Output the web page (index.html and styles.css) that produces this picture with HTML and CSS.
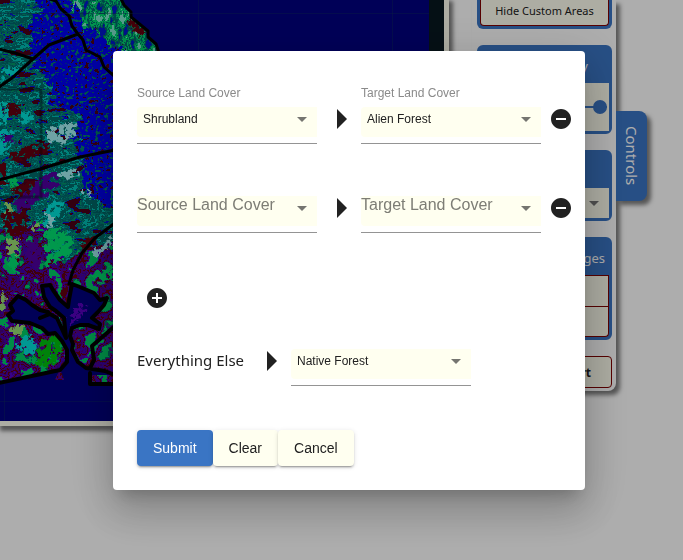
FILE: index.html
```html
<!DOCTYPE html>
<html lang="en">
<head>
<meta charset="utf-8">
<title>Land Cover</title>
<link rel="stylesheet" href="styles.css">
</head>
<body>
<main class="page">
  <section class="map">
    <svg class="map-tiles" width="429" height="421" viewBox="0 0 429 421" aria-hidden="true">
      <defs>
        <filter id="upland" x="0" y="0" width="1" height="1" color-interpolation-filters="sRGB">
          <feTurbulence type="fractalNoise" baseFrequency="0.2 0.26" numOctaves="3" seed="4"/>
          <feColorMatrix values="2.2 0 0 0 -0.6  2.2 0 0 0 -0.6  2.2 0 0 0 -0.6  0 0 0 0 1"/>
          <feComponentTransfer result="n">
            <feFuncR type="discrete" tableValues="0 0 0 0 0 0 0 0 0 0.3"/>
            <feFuncG type="discrete" tableValues="0.5 0.38 0 0 0 0 0 0 0.2 0"/>
            <feFuncB type="discrete" tableValues="0.45 0.5 0.96 0.96 0.96 0.96 0.96 0.96 0.7 0.1"/>
          </feComponentTransfer>
          <feComposite in="n" in2="SourceGraphic" operator="in"/>
        </filter>
        <filter id="scrub" x="-0.1" y="-0.1" width="1.2" height="1.2" color-interpolation-filters="sRGB">
          <feTurbulence type="fractalNoise" baseFrequency="0.06 0.14" numOctaves="4" seed="9" result="t"/>
          <feColorMatrix values="2.6 0 0 0 -0.8  2.6 0 0 0 -0.8  2.6 0 0 0 -0.8  0 0 0 0 1"/>
          <feComponentTransfer result="n">
            <feFuncR type="discrete" tableValues="0.3 0 0 0 0 0 0 0 0 0 0"/>
            <feFuncG type="discrete" tableValues="0 0.1 0.6 0.5 0.4 0.44 0.55 0.42 0.75 0.75 0.42"/>
            <feFuncB type="discrete" tableValues="0.1 0.85 0.4 0.48 0.42 0.44 0.52 0.42 0.72 0.7 0.42"/>
          </feComponentTransfer>
          <feDisplacementMap in="SourceGraphic" in2="t" scale="36" xChannelSelector="G" yChannelSelector="B" result="s"/>
          <feComposite in="n" in2="s" operator="in"/>
        </filter>
        <filter id="coast" x="-0.1" y="-0.1" width="1.2" height="1.2" color-interpolation-filters="sRGB">
          <feTurbulence type="fractalNoise" baseFrequency="0.16 0.08" numOctaves="4" seed="21" result="t"/>
          <feColorMatrix values="2.4 0 0 0 -0.7  2.4 0 0 0 -0.7  2.4 0 0 0 -0.7  0 0 0 0 1"/>
          <feComponentTransfer result="n">
            <feFuncR type="discrete" tableValues="0 0 0 0 0 0 0 0 0.5"/>
            <feFuncG type="discrete" tableValues="0.1 0.42 0.42 0.6 0.85 0.42 0.85 0.8 0.9"/>
            <feFuncB type="discrete" tableValues="0.8 0.42 0.42 0.45 0.45 0.42 0.42 0.45 0.8"/>
          </feComponentTransfer>
          <feDisplacementMap in="SourceGraphic" in2="t" scale="24" xChannelSelector="G" yChannelSelector="B" result="s"/>
          <feComposite in="n" in2="s" operator="in"/>
        </filter>
        <filter id="urban" x="-0.1" y="-0.1" width="1.2" height="1.2" color-interpolation-filters="sRGB">
          <feTurbulence type="fractalNoise" baseFrequency="0.06" numOctaves="4" seed="14" result="t"/>
          <feColorMatrix values="2.4 0 0 0 -0.7  2.4 0 0 0 -0.7  2.4 0 0 0 -0.7  0 0 0 0 1"/>
          <feComponentTransfer result="n">
            <feFuncR type="discrete" tableValues="0 0 0.33 0.4 0.3 0.25 0.33 0.38 0.3 0.33 0"/>
            <feFuncG type="discrete" tableValues="0.8 0.45 0 0 0 0 0 0 0 0 0.8"/>
            <feFuncB type="discrete" tableValues="0.4 0.4 0.6 0.04 0.5 0.7 0.55 0.06 0.6 0.8 0.4"/>
          </feComponentTransfer>
          <feDisplacementMap in="SourceGraphic" in2="t" scale="30" xChannelSelector="G" yChannelSelector="B" result="s"/>
          <feComposite in="n" in2="s" operator="in"/>
        </filter>
        <filter id="rough" x="-0.3" y="-0.3" width="1.6" height="1.6" color-interpolation-filters="sRGB">
          <feTurbulence type="fractalNoise" baseFrequency="0.18" numOctaves="3" seed="7" result="t"/>
          <feDisplacementMap in="SourceGraphic" in2="t" scale="10" xChannelSelector="R" yChannelSelector="G" result="s"/>
          <feColorMatrix in="t" values="0 0 0 0 0  0 0 0 0 0  0 0 0 0 0  0 0 14 0 -5" result="m"/>
          <feComposite in="s" in2="m" operator="in"/>
        </filter>
        <clipPath id="land">
          <path d="M0 0H121L124 5L131 12V17L148 31V37L156 44L160 52V320H113V383H91V375H113L105 372L92 370L82 367L74 357L71 347V380H55L60 369L0 383Z"/>
        </clipPath>
      </defs>
      <rect width="429" height="421" fill="#000080"/>
      <g clip-path="url(#land)">
        <rect width="170" height="390" filter="url(#upland)"/>
        <path filter="url(#scrub)" d="M-20-20H40L34 14L28 36L30 60L44 76L52 104L76 118L72 145L86 160L80 178L94 200L130 210V290H-20Z"/>
        <path filter="url(#coast)" d="M66-15H130L175 56H134L112 44L92 32L74 10Z"/>
        <path filter="url(#urban)" d="M-20 236L20 222L44 226L54 262L90 246L135 235V410H-20Z"/>
        <g filter="url(#rough)">
          <path fill="#00e0d8" d="M-4 104L12 104L8 124L-4 126ZM20 114L36 110L32 122L20 124ZM-4 130L14 132L10 150L-4 158ZM0 70L18 66L20 72L0 78ZM48 202L66 200L56 222L42 228ZM14 344L32 334L38 346L32 356L20 352Z"/>
          <path fill="#a4f0f4" d="M46 130L62 124L78 122L74 134L64 144L50 142ZM58 174L76 168L78 176L64 180ZM80 190L92 190L86 198ZM90 254L112 236L114 242L94 258ZM44 210L54 218L50 230Z"/>
          <path fill="#00e070" d="M44 232L62 228L74 240L70 258L56 262L46 270ZM10 174L18 180L14 192L8 186ZM88 276L114 264V280L100 284ZM10 240L22 246L16 276L8 264Z"/>
          <path fill="#00c010" d="M42 340L58 334L64 350L56 364L40 368L34 358Z"/>
          <path fill="#98dc74" d="M8 238L20 240L18 256L6 252ZM30 226L40 222L34 232ZM10 326L24 324L22 336L12 336ZM4 200L14 208L8 220ZM0 292L6 298L4 312L0 310Z"/>
          <path fill="#00b8b0" d="M32 306L46 316L60 316L64 332L52 330L40 320Z"/>
          <path fill="#640010" d="M6 104L20 104L20 116L8 116ZM6 156L30 144L50 142L46 152L30 158L14 164ZM2 212L28 212L26 236L6 236ZM-4 162H6V184H-4ZM10 188L34 180L38 190L20 200ZM84 238L98 236L90 250L80 254ZM62 288L70 286L68 302L60 298ZM126 20L134 18L148 32L140 38Z"/>
          <path fill="#5000a0" d="M4 134L16 134L14 144L4 142ZM40 176L58 172L60 184L42 200L20 212L12 202L28 194ZM26 240L36 238L44 262L36 270L26 262Z"/>
        </g>
        <path fill="#000080" d="M18 296L10 305L13 311L8 315L12 321L30 323L42 328L48 334L55 333L62 341L66 346V358L60 369L68 390L92 370L82 367L74 357L71 345L72 328L80 325L96 327L100 324L92 318L104 305L107 298L100 300L94 293L80 287L72 284L69 300L68 307L60 300L53 290L50 285L42 286L44 297L50 307L56 311L64 318L66 338L57 318L48 312L40 310L32 305L26 300Z"/>
        <path fill="#5800c0" filter="url(#rough)" d="M68 318L80 304L90 306L78 320L68 326Z"/>
      </g>
      <g fill="none" stroke="#000" stroke-width="3" stroke-linejoin="round" stroke-linecap="round">
        <path d="M50-1L56 1L61 9L69 16L72 26L78 34L83 40L86 50L100 57L104 67L114 76M78 34L49 45L33 59L12 78L-1 87M-1 49L15 53L33 59M-1 180L40 169L80 157L115 150M115 223L95 238L82 253L73 270L69 284M121-1L124 5L131 12V17L148 31V37L156 44L159 53"/>
        <path stroke-width="4" d="M-1 383L60 370L67 362V350L62 341L55 333L48 334L42 328L30 323L12 321L8 315L13 311L10 305L18 296L26 300L32 305L40 310L48 312M40 318L50 314L57 318L66 338L64 318L56 311L50 307L44 297L42 286L50 285L53 290L60 300L68 307L69 300L72 284L80 287L94 293L100 300L107 298L104 305L98 312L92 318L100 324L99 329L88 325L80 325L72 328L70 336L73 344L72 350L78 362L86 368L105 371L115 375M115 326L92 346L94 360L90 368M90 373V384H115"/>
      </g>
      <path fill="none" stroke="#000" stroke-opacity=".35" stroke-width="3" d="M-2 89H41V197H-2"/>
      <path stroke="#103060" stroke-opacity=".4" d="M0 13.500H429M392.500 0V421M198.500 0V52M0 401.500H429M4.500 384V421"/>
    </svg>
  </section>

  <aside class="sidebar">
    <section class="panel panel-first">
      <button class="panel-button" type="button">Hide Custom Areas</button>
    </section>
    <section class="panel">
      <label class="panel-title title-opacity" for="opacity">Opacity</label>
      <div class="panel-body slider-body"><input class="slider" id="opacity" type="range" min="0" max="100" value="100"></div>
    </section>
    <section class="panel">
      <div class="panel-title"></div>
      <div class="panel-body select-body">
        <select class="side-select" aria-label="Layer"><option></option></select>
        <svg class="side-caret" width="10" height="5" viewBox="0 0 10 5" aria-hidden="true"><path d="M0 0H10L5 5Z"/></svg>
      </div>
    </section>
    <section class="panel">
      <div class="panel-title">Changes</div>
      <button class="panel-button stacked" type="button" aria-label="First"></button>
      <button class="panel-button stacked" type="button" aria-label="Second"></button>
    </section>
    <button class="panel-button export" type="button">Export</button>
  </aside>
  <button class="tab" type="button">Controls</button>
</main>

<div class="backdrop">
  <form class="dialog" role="dialog" aria-modal="true">
    <div class="row">
      <div class="field">
        <label class="label" for="s1">Source Land Cover</label>
        <select class="select" id="s1"><option>Shrubland</option></select>
        <svg class="caret" width="10" height="5" viewBox="0 0 10 5" aria-hidden="true"><path d="M0 0H10L5 5Z"/></svg>
      </div>
      <svg class="arrow" width="10" height="20" viewBox="0 0 10 20" aria-hidden="true"><path d="M0 0L10 10L0 20Z"/></svg>
      <div class="field">
        <label class="label" for="t1">Target Land Cover</label>
        <select class="select" id="t1"><option>Alien Forest</option></select>
        <svg class="caret" width="10" height="5" viewBox="0 0 10 5" aria-hidden="true"><path d="M0 0H10L5 5Z"/></svg>
      </div>
      <button class="icon-button remove" type="button" aria-label="Remove"><svg width="24" height="24" viewBox="0 0 24 24"><path d="M12 2C6.480 2 2 6.480 2 12s4.480 10 10 10 10-4.480 10-10S17.520 2 12 2zm5 11H7v-2h10v2z"/></svg></button>
    </div>
    <div class="row">
      <div class="field empty">
        <label class="label" for="s2">Source Land Cover</label>
        <select class="select" id="s2"><option></option></select>
        <svg class="caret" width="10" height="5" viewBox="0 0 10 5" aria-hidden="true"><path d="M0 0H10L5 5Z"/></svg>
      </div>
      <svg class="arrow" width="10" height="20" viewBox="0 0 10 20" aria-hidden="true"><path d="M0 0L10 10L0 20Z"/></svg>
      <div class="field empty">
        <label class="label" for="t2">Target Land Cover</label>
        <select class="select" id="t2"><option></option></select>
        <svg class="caret" width="10" height="5" viewBox="0 0 10 5" aria-hidden="true"><path d="M0 0H10L5 5Z"/></svg>
      </div>
      <button class="icon-button remove" type="button" aria-label="Remove"><svg width="24" height="24" viewBox="0 0 24 24"><path d="M12 2C6.480 2 2 6.480 2 12s4.480 10 10 10 10-4.480 10-10S17.520 2 12 2zm5 11H7v-2h10v2z"/></svg></button>
    </div>
    <button class="icon-button add" type="button" aria-label="Add"><svg width="24" height="24" viewBox="0 0 24 24"><path d="M12 2C6.480 2 2 6.480 2 12s4.480 10 10 10 10-4.480 10-10S17.520 2 12 2zm5 11h-4v4h-2v-4H7v-2h4V7h2v4h4v2z"/></svg></button>
    <div class="row rest">
      <label class="rest-label" for="rest">Everything Else</label>
      <svg class="arrow" width="10" height="20" viewBox="0 0 10 20" aria-hidden="true"><path d="M0 0L10 10L0 20Z"/></svg>
      <div class="field">
        <select class="select" id="rest"><option>Native Forest</option></select>
        <svg class="caret" width="10" height="5" viewBox="0 0 10 5" aria-hidden="true"><path d="M0 0H10L5 5Z"/></svg>
      </div>
    </div>
    <div class="actions">
      <button class="button primary" type="submit">Submit</button>
      <button class="button" type="button">Clear</button>
      <button class="button" type="button">Cancel</button>
    </div>
  </form>
</div>
</body>
</html>
```
FILE: styles.css
```css
* { box-sizing: border-box; }

body {
  margin: 0;
  background: #fff;
  color: #212121;
  font-family: "Liberation Sans", Arial, sans-serif;
  overflow: hidden;
}

button, select, input { font: inherit; color: inherit; margin: 0; }

.page {
  display: flex;
  align-items: flex-start;
  min-height: 100vh;
  padding-right: 36px;
}

.map {
  flex: 1;
  min-width: 0;
  margin-right: 23px;
  overflow: hidden;
  background: #081820;
  border: solid #fffff0;
  border-width: 0 5px 5px 0;
  box-shadow: 2px 3px 4px 2px rgba(0, 0, 0, .5);
}

.map-tiles { display: block; }

.sidebar {
  display: flex;
  flex-direction: column;
  gap: 16px;
  width: 144px;
  padding: 0 4px 3px 5px;
  background: #fff;
  border-radius: 0 0 8px 0;
  box-shadow: 4px 4px 4px rgba(0, 0, 0, .5);
  font-family: "Noto Sans", sans-serif;
}

.panel {
  display: flex;
  flex-direction: column;
  border: 3px solid #3a75c4;
  border-radius: 6px;
  background: #3a75c4;
}

.panel-first { border-top: 0; border-radius: 0 0 6px 6px; }

.panel-title {
  height: 35px;
  padding-right: 4px;
  color: #fff;
  font-size: 13px;
  line-height: 36px;
  text-align: right;
}

.title-opacity { padding-right: 21px; }

.panel-body { background: #fffff0; }

.panel-button {
  height: 32px;
  padding: 0;
  background: #fffff0;
  border: 1px solid #800000;
  border-radius: 4px;
  font-size: 12px;
}

.panel-first .panel-button {
  height: 26px;
  padding-bottom: 4px;
  border-top: 0;
  border-radius: 0 0 4px 4px;
  font-size: 11px;
}

.stacked { border-radius: 0; }
.stacked:last-child { height: 30px; border-radius: 0 0 4px 4px; border-top: 0; }

.export {
  padding-right: 20px;
  font-weight: 700;
  text-align: right;
}

.slider-body { display: flex; align-items: center; height: 48px; padding: 0 2px; }

.slider {
  appearance: none;
  width: 100%;
  height: 14px;
  background: linear-gradient(#3a75c4, #3a75c4) center / 100% 2px no-repeat;
}

.slider::-webkit-slider-thumb {
  appearance: none;
  width: 14px;
  height: 14px;
  border-radius: 50%;
  background: #3a75c4;
}

.select-body { display: flex; align-items: center; height: 30px; padding-right: 10px; }
.side-select { flex: 1; min-width: 0; appearance: none; border: 0; background: transparent; }
.side-caret { fill: #757575; }

.tab {
  width: 31px;
  height: 90px;
  margin-top: 111px;
  padding: 0;
  border: 0;
  border-radius: 0 8px 8px 0;
  background: #3a75c4;
  box-shadow: 4px 4px 4px rgba(0, 0, 0, .5);
  color: #fff;
  font-family: "Noto Sans", sans-serif;
  font-size: 15px;
  writing-mode: vertical-rl;
}

.backdrop {
  position: fixed;
  inset: 0;
  display: flex;
  align-items: center;
  justify-content: center;
  padding: 0 0 19px 15px;
  background: rgba(0, 0, 0, .32);
}

.dialog {
  padding: 24px 12px 24px 24px;
  background: #fff;
  border-radius: 4px;
  box-shadow: 0 11px 15px -7px rgba(0, 0, 0, .2), 0 24px 38px 3px rgba(0, 0, 0, .14), 0 9px 46px 8px rgba(0, 0, 0, .12);
}

.row { display: flex; align-items: flex-end; padding: 8px 0 20px; }

.field {
  position: relative;
  width: 180px;
  padding-bottom: 6px;
  border-bottom: 1px solid #949494;
}

.label {
  display: block;
  margin-bottom: 4px;
  color: #8a8a8a;
  font-size: 12px;
  line-height: 20px;
}

.empty { padding-top: 24px; }

.empty .label {
  position: absolute;
  top: 23px;
  left: 0;
  color: #7d7d75;
  font-size: 16px;
  pointer-events: none;
}

.select {
  display: block;
  appearance: none;
  width: 100%;
  height: 30px;
  padding: 0 24px 6px 6px;
  border: 0;
  border-radius: 4px 0 0 4px;
  background: #fffff0;
  font-size: 12px;
}

.caret {
  position: absolute;
  right: 10px;
  bottom: 21px;
  fill: #757570;
}

.arrow { margin: 0 14px 15px 20px; fill: #212121; }

.icon-button {
  display: block;
  width: 24px;
  height: 24px;
  padding: 0;
  border: 0;
  background: none;
  fill: #212121;
}

.remove { margin: 0 0 13px 8px; }
.add { margin: 33px 0 39px 8px; }

.rest { padding: 0; }

.rest-label {
  width: 110px;
  margin-bottom: 16px;
  font-family: "Noto Sans", sans-serif;
  font-size: 15px;
  line-height: 20px;
}

.actions { display: flex; margin-top: 44px; }

.button {
  height: 36px;
  padding: 0 16px;
  border: 0;
  border-radius: 4px;
  background: #fffff0;
  box-shadow: 0 3px 1px -2px rgba(0, 0, 0, .2), 0 2px 2px rgba(0, 0, 0, .14), 0 1px 5px rgba(0, 0, 0, .12);
  font-size: 14px;
}

.primary { background: #3a75c4; color: #fff; }
```
